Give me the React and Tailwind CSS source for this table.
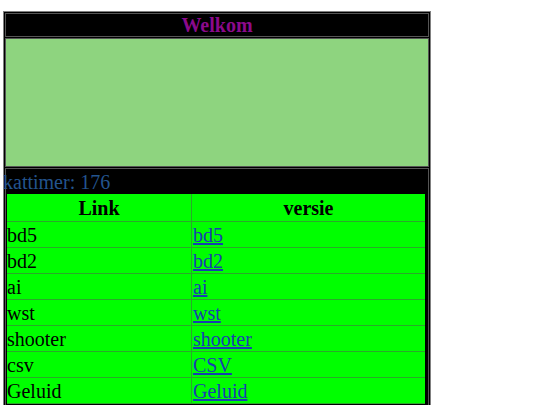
const rows = [
  ["bd5", "bd5"],
  ["bd2", "bd2"],
  ["ai", "ai"],
  ["wst", "wst"],
  ["shooter", "shooter"],
  ["csv", "CSV"],
  ["Geluid", "Geluid"],
];

export default function App() {
  return (
    <div className="min-h-[405px] bg-white pt-[11px] pl-[3px] font-['Liberation_Serif',serif] text-[20px] text-black">
      <div className="w-[428px] border border-[#808080] bg-black p-px">
        {/* titel */}
        <div className="flex h-[24px] items-center justify-center border border-[#555] font-bold text-[#8b0a8b]">
          Welkom
        </div>

        {/* leeg vak */}
        <div className="mt-px h-[129px] border border-[#555] bg-[#8ed47f]" />

        <div className="mt-px flex h-[26px] items-center border-x border-t border-[#555] text-[#23548e]">
          <span className="-ml-[3px]">kattimer: 176</span>
        </div>

        <div className="border-x border-[#555] pr-[3px] pl-px pb-2">
          <div className="bg-[#00ff00]">
            <div className="grid grid-cols-[185px_1fr] border-b border-[#2aa82a] font-bold">
              <div className="flex h-[27px] items-center justify-center border-r border-[#2aa82a]">Link</div>
              <div className="flex h-[27px] items-center justify-center">versie</div>
            </div>
            {rows.map(([a, b]) => (
              <div key={a} className="grid grid-cols-[185px_1fr] border-b border-[#2aa82a]">
                <div className="flex h-[25px] items-center border-r border-[#2aa82a]">{a}</div>
                <div className="flex h-[25px] items-center pl-px">
                  <a href="#" className="text-[#1840b0] underline">
                    {b}
                  </a>
                </div>
              </div>
            ))}
          </div>
        </div>
      </div>
    </div>
  );
}
